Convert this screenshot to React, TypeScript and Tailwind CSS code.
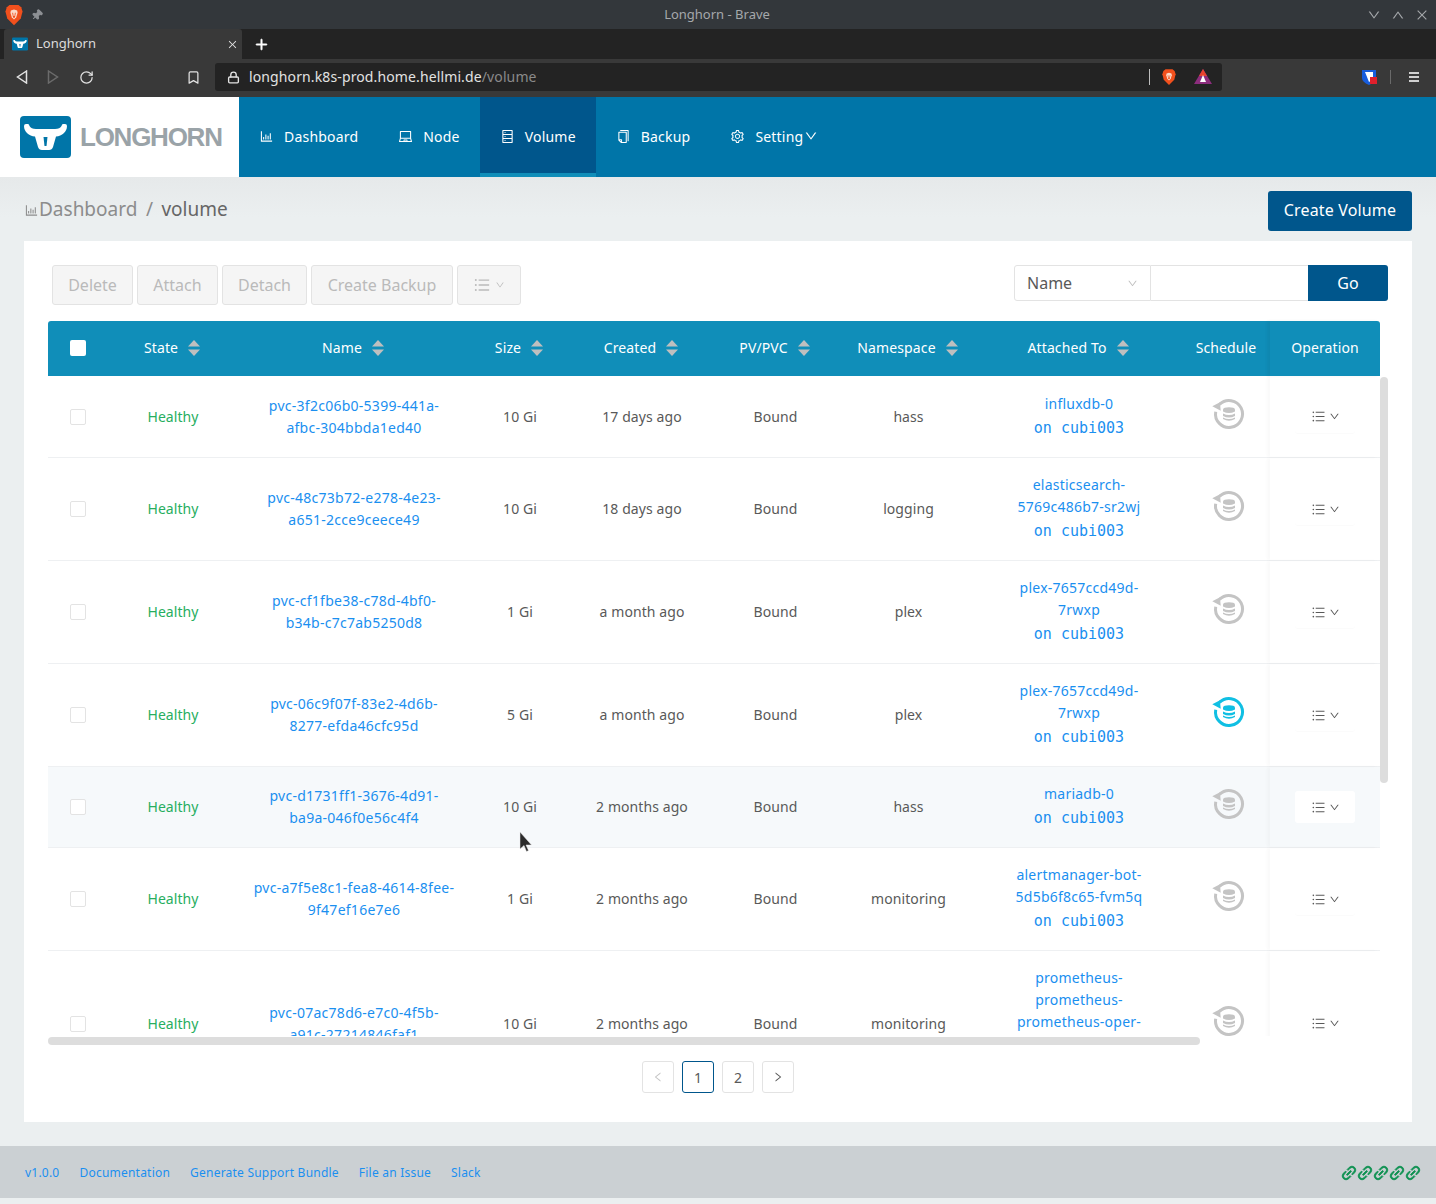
import React from 'react';
import {
  AiOutlineBarChart,
  AiOutlineLaptop,
  AiOutlineDatabase,
  AiOutlineCopy,
  AiOutlineSetting,
  AiOutlineDown,
  AiOutlineUp,
  AiOutlineLeft,
  AiOutlineRight,
  AiOutlineUnorderedList,
  AiOutlineLink,
  AiOutlineClose,
  AiOutlinePlus,
} from 'react-icons/ai';
import { Pin, RotateCw, Bookmark, Lock } from 'lucide-react';

const GRID = 'grid grid-cols-[60px_130px_232px_100px_144px_123px_143px_198px_92px_110px]';

const rows = [
  { h: 'h-[82px]', name: ['pvc-3f2c06b0-5399-441a-', 'afbc-304bbda1ed40'], size: '10 Gi', created: '17 days ago', ns: 'hass', pod: ['influxdb-0'] },
  { h: 'h-[103px]', name: ['pvc-48c73b72-e278-4e23-', 'a651-2cce9ceece49'], size: '10 Gi', created: '18 days ago', ns: 'logging', pod: ['elasticsearch-', '5769c486b7-sr2wj'] },
  { h: 'h-[103px]', name: ['pvc-cf1fbe38-c78d-4bf0-', 'b34b-c7c7ab5250d8'], size: '1 Gi', created: 'a month ago', ns: 'plex', pod: ['plex-7657ccd49d-', '7rwxp'] },
  { h: 'h-[103px]', name: ['pvc-06c9f07f-83e2-4d6b-', '8277-efda46cfc95d'], size: '5 Gi', created: 'a month ago', ns: 'plex', pod: ['plex-7657ccd49d-', '7rwxp'], active: true },
  { h: 'h-[81px]', name: ['pvc-d1731ff1-3676-4d91-', 'ba9a-046f0e56c4f4'], size: '10 Gi', created: '2 months ago', ns: 'hass', pod: ['mariadb-0'], hover: true },
  { h: 'h-[103px]', name: ['pvc-a7f5e8c1-fea8-4614-8fee-', '9f47ef16e7e6'], size: '1 Gi', created: '2 months ago', ns: 'monitoring', pod: ['alertmanager-bot-', '5d5b6f8c65-fvm5q'] },
  { h: 'h-[146px]', name: ['pvc-07ac78d6-e7c0-4f5b-', 'a91c-27214846faf1'], size: '10 Gi', created: '2 months ago', ns: 'monitoring', pod: ['prometheus-', 'prometheus-', 'prometheus-oper-', 'prometheus-0'] },
];

const LonghornLogo = ({ className }: { className: string }) => (
  <svg viewBox="0 0 51 42" className={className}>
    <rect width="51" height="42" rx="4" fill="#0075a8" />
    <path d="M4 10Q4 8 6 8H8Q9 8 9.500 10Q11 13 16 13H35Q40 13 41.500 10Q42 8 43 8H45Q47 8 47 10C47 16 42 20 36 20.500L33 31Q32 34 29 34H22Q19 34 18 31L15 20.500C9 20 4 16 4 10Z" fill="#fff" />
    <path d="M23.500 21H27.500L26.500 30H24.500Z" fill="#0075a8" />
  </svg>
);

const BraveLogo = ({ className }: { className: string }) => (
  <svg viewBox="0 0 20 24" className={className}>
    <path d="M5 1H15L18 3.500 19.500 8 17.500 16 10 23.500 2.500 16 .5 8 2 3.500Z" fill="#f1501d" />
    <path d="M6.500 7 10 6 13.500 7 14 9.500 12.500 14.500 10 17 7.500 14.500 6 9.500Z" fill="#fbd9c8" />
    <path d="M8 9.500H9L9.500 13H10.500L11 9.500H12L11 15H9Z" fill="#f1501d" />
  </svg>
);

const ScheduleIcon = ({ active }: { active?: boolean }) => {
  const color = active ? '#10bfe3' : '#c4c4c4';
  return (
    <svg viewBox="-18 -18 36 36" className="w-9 h-9">
      <path d="M-9.500 -9.600A13.500 13.500 0 1 1-13.300 -2.300" fill="none" stroke={color} strokeWidth="3" />
      <polygon points="-16.700,-7.700 -9,-11.700 -8.300,-3.300" fill={color} />
      <path d="M-6 -4.500a6 2.300 0 0 1 12 0v2q-6 3-12 0Z" fill={color} />
      <path d="M-6 -.5q6 3 12 0v2.500q-6 3-12 0Z" fill={color} />
      <path d="M-6 3.500q6 3 12 0v1.500q-6 3.500-12 0Z" fill={color} />
    </svg>
  );
};

const SortCaret = () => (
  <svg viewBox="0 0 12 16" className="w-3 h-4 mr-0.5">
    <path d="M6 0L12 6.500H0Z" fill="#bfbfbf" />
    <path d="M6 16L12 9.500H0Z" fill="#bfbfbf" />
  </svg>
);

const BrowserChrome = () => (
  <div className="font-['Noto_Sans',sans-serif]">
    <div className="h-[29px] bg-[#33373b] flex items-center justify-between pl-[5px] pr-[7px]">
      <div className="flex items-center gap-[8px] w-[120px]">
        <BraveLogo className="w-[18px] h-[22px]" />
        <Pin size={12} fill="currentColor" className="text-[#8d9094] rotate-45" />
      </div>
      <span className="text-[13px] text-[#a5a8ab]">Longhorn - Brave</span>
      <div className="flex items-center justify-end gap-[10px] w-[120px] text-[#a5a8ab]">
        <AiOutlineDown size={14} />
        <AiOutlineUp size={14} />
        <AiOutlineClose size={14} />
      </div>
    </div>
    <div className="h-[30px] bg-[#232323] flex items-end pl-[4px]">
      <div className="w-[238px] h-[30px] bg-[#393939] rounded-t-[3px] flex items-center pl-[8px] pr-[4px]">
        <LonghornLogo className="w-4 h-4" />
        <span className="ml-[8px] text-[13px] text-[#dcdcdc]">Longhorn</span>
        <AiOutlineClose size={11} className="ml-auto text-[#e5e5e5]" />
      </div>
      <div className="h-[30px] flex items-center ml-[12px]">
        <AiOutlinePlus size={15} className="text-white stroke-[60]" />
      </div>
    </div>
    <div className="h-[38px] bg-[#393939] flex items-center pr-[14px] pb-[2px]">
      <svg viewBox="0 0 12 14" className="w-3 h-[14px] ml-[16px] text-[#e2e2e2]">
        <path d="M10.500 1L1.500 7L10.500 13Z" fill="none" stroke="currentColor" strokeWidth="1.500" />
      </svg>
      <svg viewBox="0 0 12 14" className="w-3 h-[14px] ml-[19px] text-[#6b6b6b]">
        <path d="M1.500 1L10.500 7L1.500 13Z" fill="none" stroke="currentColor" strokeWidth="1.500" />
      </svg>
      <RotateCw size={15} className="ml-[20px] text-[#e2e2e2]" />
      <Bookmark size={15} className="ml-[92px] text-[#e2e2e2]" />
      <div className="ml-[14px] w-[1007px] h-[28px] bg-[#232323] rounded-[3px] flex items-center pl-[12px] pr-[10px]">
        <Lock size={13} className="text-[#e2e2e2]" strokeWidth={2.5} />
        <span className="ml-[9px] mb-[2px] text-[14px] tracking-[0.12px] text-[#e2e2e2]">
          longhorn.k8s-prod.home.hellmi.de<span className="text-[#8a8a8a]">/volume</span>
        </span>
        <div className="ml-auto w-px h-[16px] bg-[#bdbdbd]" />
        <BraveLogo className="ml-[12px] w-[14px] h-[18px]" />
        <svg viewBox="0 0 18 16" className="ml-[18px] w-[18px] h-4">
          <path d="M9 0L18 15H0Z" fill="#8c2d7d" />
          <path d="M9 0L13 7H5Z" fill="#e8432e" />
          <path d="M9 6L12 13H6Z" fill="#fff" />
        </svg>
      </div>
      <svg viewBox="0 0 16 16" className="ml-[139px] w-4 h-4">
        <path d="M1 1H15V9Q15 13 8 16Q1 13 1 9Z" fill="#175ddc" />
        <path d="M4 3H12V9Q12 11 8 13Z" fill="#fff" />
        <rect x="9" y="8" width="7" height="7" fill="#e0202c" />
      </svg>
      <div className="ml-[13px] w-px h-[14px] bg-[#6a6a6a]" />
      <div className="ml-[18px] w-[10px] flex flex-col gap-[2px]">
        <div className="h-[2px] bg-[#d0d0d0]" />
        <div className="h-[2px] bg-[#d0d0d0]" />
        <div className="h-[2px] bg-[#d0d0d0]" />
      </div>
    </div>
  </div>
);

const NavItem = ({ icon, label, active, extra }: { icon: React.ReactNode; label: string; active?: boolean; extra?: React.ReactNode }) => (
  <div className={`h-20 px-5 flex items-center gap-[10px] text-white text-[14px] tracking-[0.2px] border-b-4 pt-[2px] ${active ? 'bg-[#00568c] border-[#108eb9]' : 'border-transparent'}`}>
    {icon}
    <span>{label}</span>
    {extra}
  </div>
);

const ToolButton = ({ className, children }: { className: string; children: React.ReactNode }) => (
  <div className={`h-10 flex items-center justify-center bg-[#f5f5f5] border border-[#e3e3e3] rounded-[3px] text-[16px] text-[#bababa] ${className}`}>{children}</div>
);

const HeaderCell = ({ label, sort = true }: { label: string; sort?: boolean }) => (
  <div className="flex items-center justify-center gap-[10px] mb-[2px] text-[14px] tracking-[0.12px] text-white">
    <span>{label}</span>
    {sort && <SortCaret />}
  </div>
);

const PageButton = ({ children, current }: { children: React.ReactNode; current?: boolean }) => (
  <div className={`w-8 h-8 flex items-center justify-center rounded-[3px] border text-[14px] text-[#595959] ${current ? 'border-[#00568c] text-[#00568c]' : 'border-[#e3e3e3]'}`}>{children}</div>
);

const App = () => {
  return (
    <div className="relative w-full h-[1204px] overflow-hidden bg-[#ebeff0] font-['Noto_Sans',sans-serif]">
      <BrowserChrome />

      {/* App header */}
      <div className="h-20 bg-[#0075a8] flex">
        <div className="w-[239px] bg-white flex items-center pl-5">
          <LonghornLogo className="w-[51px] h-[42px]" />
          <span className="ml-[9px] text-[26px] font-bold tracking-[-1.25px] text-[#9aa3a8] font-['Liberation_Sans',sans-serif]">LONGHORN</span>
        </div>
        <NavItem icon={<AiOutlineBarChart size={15} />} label="Dashboard" />
        <NavItem icon={<AiOutlineLaptop size={15} />} label="Node" />
        <NavItem active icon={<AiOutlineDatabase size={15} />} label="Volume" />
        <NavItem icon={<AiOutlineCopy size={15} />} label="Backup" />
        <NavItem icon={<AiOutlineSetting size={15} />} label="Setting" extra={<AiOutlineDown size={14} className="-ml-[9px]" />} />
      </div>

      {/* Content */}
      <div className="px-6 pt-[14px] bg-[linear-gradient(#e6e9ea,#ebeff0_40px)]">
        <div className="h-10 flex items-center justify-between">
          <div className="flex items-center text-[19px] text-[#8c8c8c] -mt-[4px]">
            <AiOutlineBarChart size={15} className="mt-[3px]" />
            <span>Dashboard</span>
            <span className="mx-[8.500px]">/</span>
            <span className="text-[#666]">volume</span>
          </div>
          <div className="h-10 w-36 pb-[2px] bg-[#00568c] rounded-[3px] text-white text-[16px] tracking-[0.15px] flex items-center justify-center">Create Volume</div>
        </div>

        <div className="mt-[10px] bg-white pt-6 pb-[29px] pl-6 pr-6">
          <div className="flex items-start justify-between h-14">
            <div className="flex gap-[4px] pl-1">
              <ToolButton className="w-[81px]">Delete</ToolButton>
              <ToolButton className="w-[81px]">Attach</ToolButton>
              <ToolButton className="w-[85px]">Detach</ToolButton>
              <ToolButton className="w-[142px]">Create Backup</ToolButton>
              <ToolButton className="w-[64px]">
                <AiOutlineUnorderedList size={18} />
                <AiOutlineDown size={10} className="ml-[4px]" />
              </ToolButton>
            </div>
            <div className="flex h-9">
              <div className="w-[137px] border border-[#e3e3e3] rounded-l-[3px] flex items-center justify-between pl-[12px] pr-[12px] text-[16px] text-[#595959]">
                Name
                <AiOutlineDown size={11} className="text-[#bfbfbf]" />
              </div>
              <div className="w-[157px] border-y border-[#e3e3e3]" />
              <div className="w-20 bg-[#00568c] rounded-r-[3px] text-white text-[16px] flex items-center justify-center">Go</div>
            </div>
          </div>

          {/* Table */}
          <div className="w-[1332px]">
            <div className={`${GRID} h-[55px] items-center bg-[#108eb9] rounded-t-[3px]`}>
              <div className="flex justify-center mb-[2px]">
                <div className="w-4 h-4 bg-white rounded-[2px]" />
              </div>
              <HeaderCell label="State" />
              <HeaderCell label="Name" />
              <HeaderCell label="Size" />
              <HeaderCell label="Created" />
              <HeaderCell label="PV/PVC" />
              <HeaderCell label="Namespace" />
              <HeaderCell label="Attached To" />
              <div className="pl-1">
                <HeaderCell label="Schedule" sort={false} />
              </div>
              <div className="h-full flex items-center justify-center shadow-[-3px_0_3px_rgba(0,0,0,0.05)]">
                <HeaderCell label="Operation" sort={false} />
              </div>
            </div>
          </div>
          <div className="flex h-[661px]">
            <div className="w-[1332px] h-[660px] overflow-hidden">
              {rows.map((row) => (
                <div key={row.name[0]} className={`${GRID} ${row.h} items-center border-b border-[#eef0f2] text-[14px] tracking-[0.08px] text-[#595959] text-center leading-[22px] ${row.hover ? 'bg-[#f6f9fb]' : ''}`}>
                  <div className="flex justify-center">
                    <div className="w-4 h-4 bg-white border border-[#e3e3e3] rounded-[2px]" />
                  </div>
                  <div className="text-[#27ae60]">Healthy</div>
                  <div className="text-[#1a8ff0] tracking-[0.26px]">
                    {row.name.map((line, i) => (
                      <div key={i}>{line}</div>
                    ))}
                  </div>
                  <div>{row.size}</div>
                  <div>{row.created}</div>
                  <div>Bound</div>
                  <div>{row.ns}</div>
                  <div className="text-[#1a8ff0] tracking-[0.24px]">
                    {row.pod.map((line, i) => (
                      <div key={i}>{line}</div>
                    ))}
                    <div className="font-['DejaVu_Sans_Mono',monospace] text-[15px] tracking-normal leading-[26px]">on cubi003</div>
                  </div>
                  <div className="flex justify-center pl-[10px] mb-[6px]">
                    <ScheduleIcon active={row.active} />
                  </div>
                  <div className="h-full flex items-center justify-center shadow-[-3px_0_3px_rgba(0,0,0,0.025)]">
                    <div className={`w-[60px] h-8 rounded-[3px] flex items-center justify-center gap-[3px] pl-[1px] ${row.hover ? 'bg-white' : 'shadow-[0_1px_1px_rgba(0,0,0,0.02)]'}`}>
                      <AiOutlineUnorderedList size={15} />
                      <AiOutlineDown size={11} />
                    </div>
                  </div>
                </div>
              ))}
            </div>
            <div className="w-2 pt-[1px]">
              <div className="h-[406px] bg-[#dddddd] rounded-[4px]" />
            </div>
          </div>
          <div className="h-2 w-[1152px] bg-[#dddddd] rounded-[4px]" />

          <div className="mt-4 flex justify-center gap-2 text-[#595959]">
            <PageButton>
              <AiOutlineLeft size={12} className="text-[#c4c4c4]" />
            </PageButton>
            <PageButton current>1</PageButton>
            <PageButton>2</PageButton>
            <PageButton>
              <AiOutlineRight size={12} />
            </PageButton>
          </div>
        </div>
      </div>

      {/* Footer */}
      <div className="mt-6 h-[52px] pt-[1px] bg-[#cbd0d3] flex items-center justify-between pl-[25px] pr-[15px] text-[12px] tracking-[0.22px] text-[#1a8ff0]">
        <div className="flex gap-5">
          <span>v1.0.0</span>
          <span>Documentation</span>
          <span>Generate Support Bundle</span>
          <span>File an Issue</span>
          <span>Slack</span>
        </div>
        <div className="flex text-[#0c9150]">
          <AiOutlineLink size={18} className="-mx-px stroke-[50]" />
          <AiOutlineLink size={18} className="-mx-px stroke-[50]" />
          <AiOutlineLink size={18} className="-mx-px stroke-[50]" />
          <AiOutlineLink size={18} className="-mx-px stroke-[50]" />
          <AiOutlineLink size={18} className="-mx-px stroke-[50]" />
        </div>
      </div>

      {/* Mouse pointer over the page */}
      <svg viewBox="0 0 13 20" className="absolute left-[519px] top-[832px] w-[13px] h-5">
        <path d="M1 0V17L5 13.500 7.500 19.500 9.500 18.500 7 13H12.500Z" fill="#2b2b2b" stroke="#e8e8e8" strokeWidth=".5" />
      </svg>
    </div>
  );
};

export default App;
